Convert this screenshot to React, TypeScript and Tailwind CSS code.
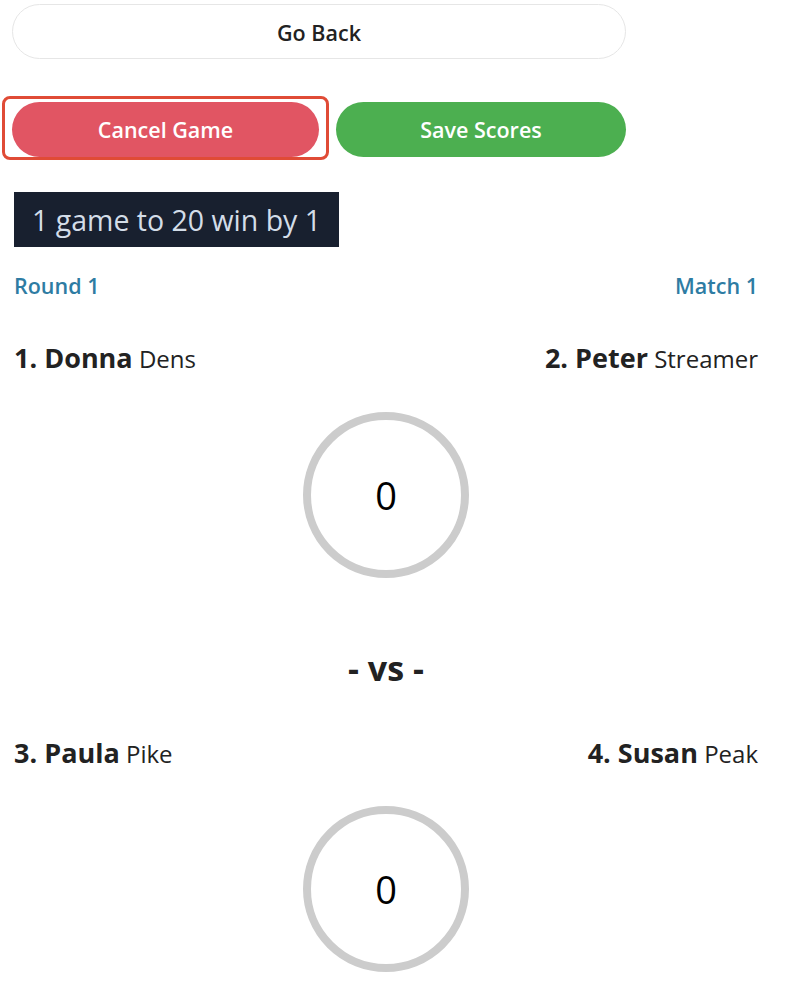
import React from 'react';

const font = { fontFamily: '"Open Sans", "Noto Sans", sans-serif' };

function ScoreCircle({ score }: { score: number }) {
  return (
    <div className="flex justify-center">
      <div className="flex h-[166px] w-[166px] items-center justify-center rounded-full border-[8px] border-[#cccccc]">
        <span className="text-[38px] font-medium text-black">{score}</span>
      </div>
    </div>
  );
}

function PlayerRow({ left, right }: { left: [string, string, string]; right: [string, string, string] }) {
  return (
    <div className="flex items-center justify-between text-[24px] leading-[36px] text-[#222]">
      <div>
        <span className="text-[27px] font-bold">
          {left[0]}. {left[1]}
        </span>{' '}
        <span className="text-[24px]">{left[2]}</span>
      </div>
      <div>
        <span className="text-[27px] font-bold">
          {right[0]}. {right[1]}
        </span>{' '}
        <span className="text-[24px]">{right[2]}</span>
      </div>
    </div>
  );
}

export default function App() {
  return (
    <div className="min-h-screen bg-white" style={font}>
      <div className="w-[758px] pl-[12px] pt-[4px]">
        {/* Go back */}
        <button className="h-[55px] w-[614px] rounded-full border border-[#e6e6e6] bg-white pt-[2px] text-[21.5px] leading-[30px] font-semibold text-[#222]">
          Go Back
        </button>

        {/* Actions */}
        <div className="mt-[37px] flex items-end gap-[7px]">
          <div className="-ml-[10px] rounded-[8px] border-[3px] border-[#e04b36] px-[7px] pt-[3px]">
            <button className="h-[55px] w-[307px] rounded-full bg-[#e15563] text-[21.5px] leading-[30px] font-semibold text-white">
              Cancel Game
            </button>
          </div>
          <button className="mb-[3px] h-[55px] w-[290px] rounded-full bg-[#4caf50] text-[21.5px] leading-[30px] font-semibold text-white">
            Save Scores
          </button>
        </div>

        <div className="ml-[2px] mt-[32px] flex flex-col">
          {/* Format */}
          <div className="flex h-[55px] w-[325px] items-center bg-[#18202f] pl-[18px] text-[28.5px] leading-[40px] text-[#d3dde8]">
            1 game to 20 win by 1
          </div>

          <div className="mt-[25px] flex items-center justify-between text-[21.5px] leading-[28px] font-semibold text-[#2e7ca3]">
            <span>Round 1</span>
            <span>Match 1</span>
          </div>

          <div className="mt-[40px]">
            <PlayerRow left={['1', 'Donna', 'Dens']} right={['2', 'Peter', 'Streamer']} />
          </div>

          <div className="mt-[35px]">
            <ScoreCircle score={0} />
          </div>

          <div className="mt-[68px] text-center text-[34px] leading-[45px] font-bold text-[#222]">- vs -</div>

          <div className="mt-[44px]">
            <PlayerRow left={['3', 'Paula', 'Pike']} right={['4', 'Susan', 'Peak']} />
          </div>

          <div className="mt-[34px]">
            <ScoreCircle score={0} />
          </div>
        </div>
      </div>
    </div>
  );
}
